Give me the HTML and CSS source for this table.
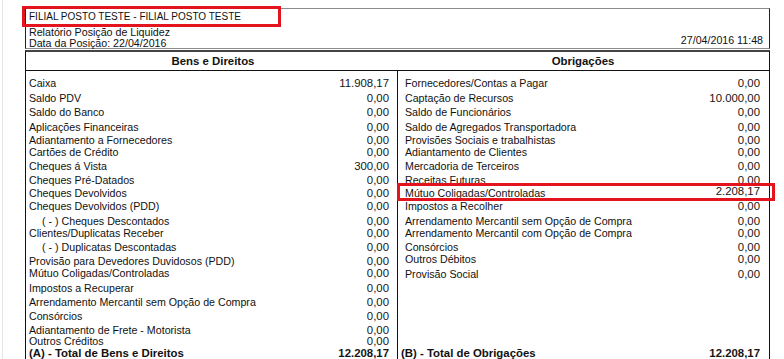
FILE: index.html
```html
<!DOCTYPE html>
<html lang="pt-BR">
<head>
<meta charset="utf-8">
<title>Relatório Posição de Liquidez</title>
<link rel="stylesheet" href="styles.css">
</head>
<body>
<div class="page">
  <div class="report">
    <div class="head">
      <div class="head-left">
        <div class="title">FILIAL POSTO TESTE - FILIAL POSTO TESTE</div>
        <div class="sub">Relatório Posição de Liquidez</div>
        <div class="sub">Data da Posição: 22/04/2016</div>
      </div>
      <div class="stamp">27/04/2016 11:48</div>
    </div>
    <div class="body">
      <div class="col-heads">
        <div class="ch ch-left">Bens e Direitos</div>
        <div class="ch ch-right">Obrigações</div>
      </div>
      <div class="cols">
        <div class="col col-left">
          <div class="row h15"><span>Caixa</span><span class="val">11.908,17</span></div>
          <div class="row h14"><span>Saldo PDV</span><span class="val">0,00</span></div>
          <div class="row h15"><span>Saldo do Banco</span><span class="val">0,00</span></div>
          <div class="row h13"><span>Aplicações Financeiras</span><span class="val">0,00</span></div>
          <div class="row h12"><span>Adiantamento a Fornecedores</span><span class="val">0,00</span></div>
          <div class="row h14"><span>Cartões de Crédito</span><span class="val">0,00</span></div>
          <div class="row h14"><span>Cheques á Vista</span><span class="val">300,00</span></div>
          <div class="row h13"><span>Cheques Pré-Datados</span><span class="val">0,00</span></div>
          <div class="row h13"><span>Cheques Devolvidos</span><span class="val">0,00</span></div>
          <div class="row h15"><span>Cheques Devolvidos (PDD)</span><span class="val">0,00</span></div>
          <div class="row h12 indent"><span>( - ) Cheques Descontados</span><span class="val">0,00</span></div>
          <div class="row h14"><span>Clientes/Duplicatas Receber</span><span class="val">0,00</span></div>
          <div class="row h14 indent"><span>( - ) Duplicatas Descontadas</span><span class="val">0,00</span></div>
          <div class="row h12"><span>Provisão para Devedores Duvidosos (PDD)</span><span class="val">0,00</span></div>
          <div class="row h15"><span>Mútuo Coligadas/Controladas</span><span class="val">0,00</span></div>
          <div class="row h14"><span>Impostos a Recuperar</span><span class="val">0,00</span></div>
          <div class="row h14"><span>Arrendamento Mercantil sem Opção de Compra</span><span class="val">0,00</span></div>
          <div class="row h14"><span>Consórcios</span><span class="val">0,00</span></div>
          <div class="row h11"><span>Adiantamento de Frete - Motorista</span><span class="val">0,00</span></div>
          <div class="row h12"><span>Outros Créditos</span><span class="val">0,00</span></div>
          <div class="row total"><span>(A) - Total de Bens e Direitos</span><span class="val">12.208,17</span></div>
        </div>
        <div class="col col-right">
          <div class="row h15"><span>Fornecedores/Contas a Pagar</span><span class="val">0,00</span></div>
          <div class="row h14"><span>Captação de Recursos</span><span class="val">10.000,00</span></div>
          <div class="row h15"><span>Saldo de Funcionários</span><span class="val">0,00</span></div>
          <div class="row h13"><span>Saldo de Agregados Transportadora</span><span class="val">0,00</span></div>
          <div class="row h12"><span>Provisões Sociais e trabalhistas</span><span class="val">0,00</span></div>
          <div class="row h14"><span>Adiantamento de Clientes</span><span class="val">0,00</span></div>
          <div class="row h14"><span>Mercadoria de Terceiros</span><span class="val">0,00</span></div>
          <div class="row h13"><span>Receitas Futuras</span><span class="val">0,00</span></div>
          <div class="row h13 marked"><span>Mútuo Coligadas/Controladas</span><span class="val raised">2.208,17</span></div>
          <div class="row h15"><span>Impostos a Recolher</span><span class="val">0,00</span></div>
          <div class="row h12"><span>Arrendamento Mercantil sem Opção de Compra</span><span class="val">0,00</span></div>
          <div class="row h14"><span>Arrendamento Mercantil com Opção de Compra</span><span class="val">0,00</span></div>
          <div class="row h12"><span>Consórcios</span><span class="val">0,00</span></div>
          <div class="row h15"><span>Outros Débitos</span><span class="val">0,00</span></div>
          <div class="row h14"><span>Provisão Social</span><span class="val">0,00</span></div>
          <div class="row total push"><span>(B) - Total de Obrigações</span><span class="val">12.208,17</span></div>
        </div>
      </div>
    </div>
  </div>
</div>
</body>
</html>
```

FILE: styles.css
```css
html, body {
  margin: 0;
  padding: 0;
  background: #ffffff;
}

body {
  font-family: "Liberation Sans", Arial, sans-serif;
  color: #111111;
  overflow: hidden;
}

.page {
  margin-left: 2px;
  border-left: 1px solid #e4e4e4;
  min-height: 100vh;
  padding: 8px 0 0 22px;
  box-sizing: border-box;
}

.report {
  width: 745px;
}

/* ---------- header box ---------- */
.head {
  height: 39px;
  border-top: 1px solid #8c8c8c;
  border-left: 1px solid #222;
  border-right: 1px solid #222;
  border-bottom: 1px solid #8c8c8c;
  display: flex;
  justify-content: space-between;
  align-items: flex-start;
  padding: 0 6px 0 3px;
}

.head-left {
  display: flex;
  flex-direction: column;
}

.title {
  position: relative;
  font-size: 10px;
  line-height: 12px;
  margin-top: 2px;
  margin-bottom: 4px;
}

.title::after {
  content: "";
  position: absolute;
  left: -7px;
  top: -5px;
  width: 253px;
  height: 15px;
  border: 3px solid #e3141d;
}

.sub {
  font-size: 10.67px;
  line-height: 11px;
}

.stamp {
  align-self: flex-end;
  font-size: 10.67px;
  line-height: 12px;
  padding-bottom: 2px;
}

/* ---------- body box ---------- */
.body {
  margin-top: 1px;
  border-top: 2px solid #444;
  border-left: 1px solid #111;
  border-right: 1px solid #111;
  display: flex;
  flex-direction: column;
}

.col-heads {
  display: grid;
  grid-template-columns: 371px 1fr;
  height: 18px;
  border-bottom: 1px solid #111;
}

.ch {
  font-weight: bold;
  font-size: 11.4px;
  line-height: 18px;
  text-align: center;
}

.ch-left {
  padding-left: 3px;
}

.cols {
  display: grid;
  grid-template-columns: 372px 1fr;
}

.col {
  display: flex;
  flex-direction: column;
  padding-top: 5px;
}

.col-left {
  border-right: 1px solid #111;
  padding-left: 3px;
  padding-right: 8px;
}

.col-right {
  padding-left: 7px;
  padding-right: 9px;
}

.row {
  display: flex;
  justify-content: space-between;
  align-items: flex-start;
  font-size: 10.67px;
  line-height: 14px;
  white-space: nowrap;
}

.row .val {
  font-size: 11.4px;
  color: #161616;
}

.h11 { height: 11px; }
.h12 { height: 12px; }
.h13 { height: 13px; }
.h14 { height: 14px; }
.h15 { height: 15px; }

.indent {
  padding-left: 13px;
}

.marked {
  position: relative;
}

.marked::after {
  content: "";
  position: absolute;
  left: -8px;
  top: -3px;
  width: 372px;
  height: 12px;
  border: 3px solid #e3141d;
}

.raised {
  margin-top: -2px;
}

.total {
  font-weight: bold;
  font-size: 11.4px;
  height: 14px;
}

.push {
  margin-top: auto;
}

.col-right .total {
  margin-left: -4px;
}
```
